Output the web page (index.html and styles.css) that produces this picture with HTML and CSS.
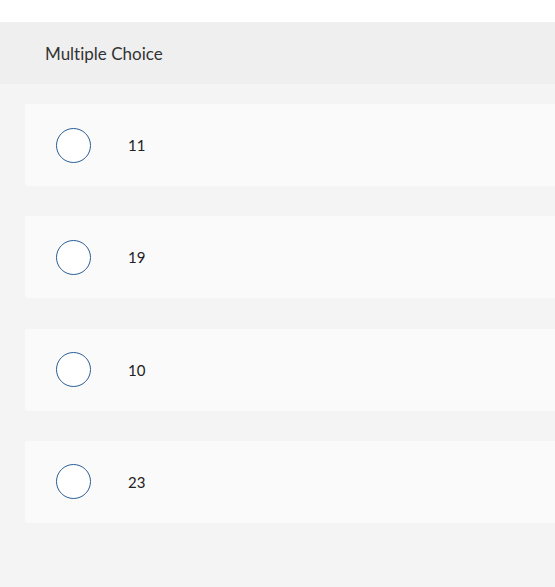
FILE: index.html
```html
<!DOCTYPE html>
<html lang="en">
<head>
<meta charset="utf-8">
<title>Multiple Choice</title>
<link rel="stylesheet" href="styles.css">
</head>
<body>
<div class="page">
  <div class="header">Multiple Choice</div>
  <div class="choices">
    <div class="choice"><span class="radio"></span><span class="label">11</span></div>
    <div class="choice"><span class="radio"></span><span class="label">19</span></div>
    <div class="choice"><span class="radio"></span><span class="label">10</span></div>
    <div class="choice"><span class="radio"></span><span class="label">23</span></div>
  </div>
</div>
</body>
</html>
```
FILE: styles.css
```css
html, body {
  margin: 0;
  padding: 0;
  background: #f4f4f4;
  overflow: hidden;
}
body {
  font-family: "Lato", "Open Sans", sans-serif;
  font-variant-ligatures: none;
  color: #333;
}
.page {
  padding-top: 22px;
  background: #fff;
  min-height: 587px;
  display: flex;
  flex-direction: column;
}
.header {
  background: #efefef;
  height: 62px;
  box-sizing: border-box;
  padding-left: 45px;
  padding-top: 1px;
  display: flex;
  align-items: center;
  font-size: 17px;
  color: #333;
}
.choices {
  flex: 1;
  background: #f4f4f4;
  padding: 20px 0 0 25px;
  display: flex;
  flex-direction: column;
  gap: 30.33px;
}
.choice {
  background: #fafafa;
  height: 82px;
  margin-right: -10px;
  border-radius: 3px;
  display: flex;
  align-items: center;
  padding-left: 31px;
}
.radio {
  width: 33px;
  height: 33px;
  border: 1px solid #2b5e92;
  border-radius: 50%;
  background: #fff;
  flex: none;
}
.label {
  margin-left: 37px;
  font-size: 15px;
  color: #222;
}
```
